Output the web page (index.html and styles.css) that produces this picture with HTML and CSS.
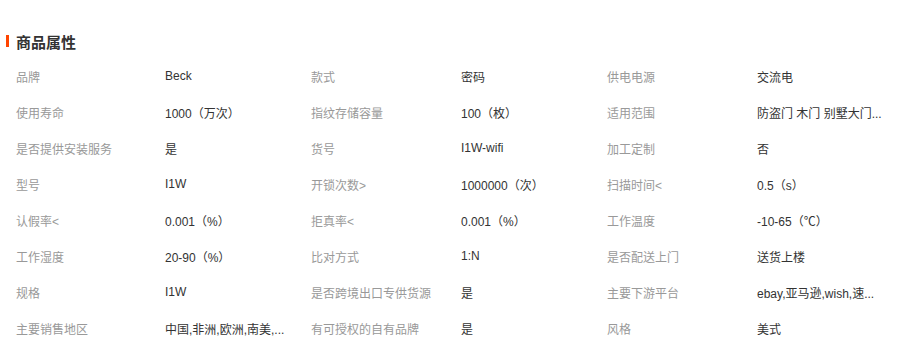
FILE: index.html
```html
<!DOCTYPE html>
<html lang="zh-CN">
<head>
<meta charset="utf-8">
<title>商品属性</title>
<link rel="stylesheet" href="styles.css">
</head>
<body>
<section class="attrs">
  <h2 class="title"><span class="bar"></span>商品属性</h2>
  <div class="grid">
    <div class="k">品牌</div><div class="v">Beck</div>
    <div class="k">款式</div><div class="v">密码</div>
    <div class="k">供电电源</div><div class="v">交流电</div>

    <div class="k">使用寿命</div><div class="v">1000（万次）</div>
    <div class="k">指纹存储容量</div><div class="v">100（枚）</div>
    <div class="k">适用范围</div><div class="v" title="防盗门 木门 别墅大门">防盗门 木门 别墅大门...</div>

    <div class="k">是否提供安装服务</div><div class="v">是</div>
    <div class="k">货号</div><div class="v">I1W-wifi</div>
    <div class="k">加工定制</div><div class="v">否</div>

    <div class="k">型号</div><div class="v">I1W</div>
    <div class="k">开锁次数&gt;</div><div class="v">1000000（次）</div>
    <div class="k">扫描时间&lt;</div><div class="v">0.5（s）</div>

    <div class="k">认假率&lt;</div><div class="v">0.001（%）</div>
    <div class="k">拒真率&lt;</div><div class="v">0.001（%）</div>
    <div class="k">工作温度</div><div class="v">-10-65（℃）</div>

    <div class="k">工作湿度</div><div class="v">20-90（%）</div>
    <div class="k">比对方式</div><div class="v">1:N</div>
    <div class="k">是否配送上门</div><div class="v">送货上楼</div>

    <div class="k">规格</div><div class="v">I1W</div>
    <div class="k">是否跨境出口专供货源</div><div class="v">是</div>
    <div class="k">主要下游平台</div><div class="v">ebay,亚马逊,wish,速...</div>

    <div class="k">主要销售地区</div><div class="v">中国,非洲,欧洲,南美,...</div>
    <div class="k">有可授权的自有品牌</div><div class="v">是</div>
    <div class="k">风格</div><div class="v">美式</div>
  </div>
</section>
</body>
</html>
```

FILE: styles.css
```css
html, body {
  margin: 0;
  padding: 0;
  background: #fff;
}

body {
  font-family: "Liberation Sans", "Noto Sans CJK SC", sans-serif;
  font-size: 12px;
  color: #333;
}

.attrs {
  padding-top: 32px;
}

.title {
  display: flex;
  align-items: center;
  gap: 7px;
  margin: 0;
  padding-left: 6px;
  height: 18px;
  font-size: 15px;
  font-weight: bold;
  color: #333;
}

.bar {
  width: 3px;
  height: 12px;
  background: #ff4400;
}

.grid {
  display: grid;
  grid-template-columns: 149px 146px 150px 146px 150px 1fr;
  grid-auto-rows: 36px;
  align-items: center;
  margin-top: 8px;
  padding-left: 16px;
}

.k {
  color: #999;
  white-space: nowrap;
}

.v {
  color: #333;
  white-space: nowrap;
}
```
